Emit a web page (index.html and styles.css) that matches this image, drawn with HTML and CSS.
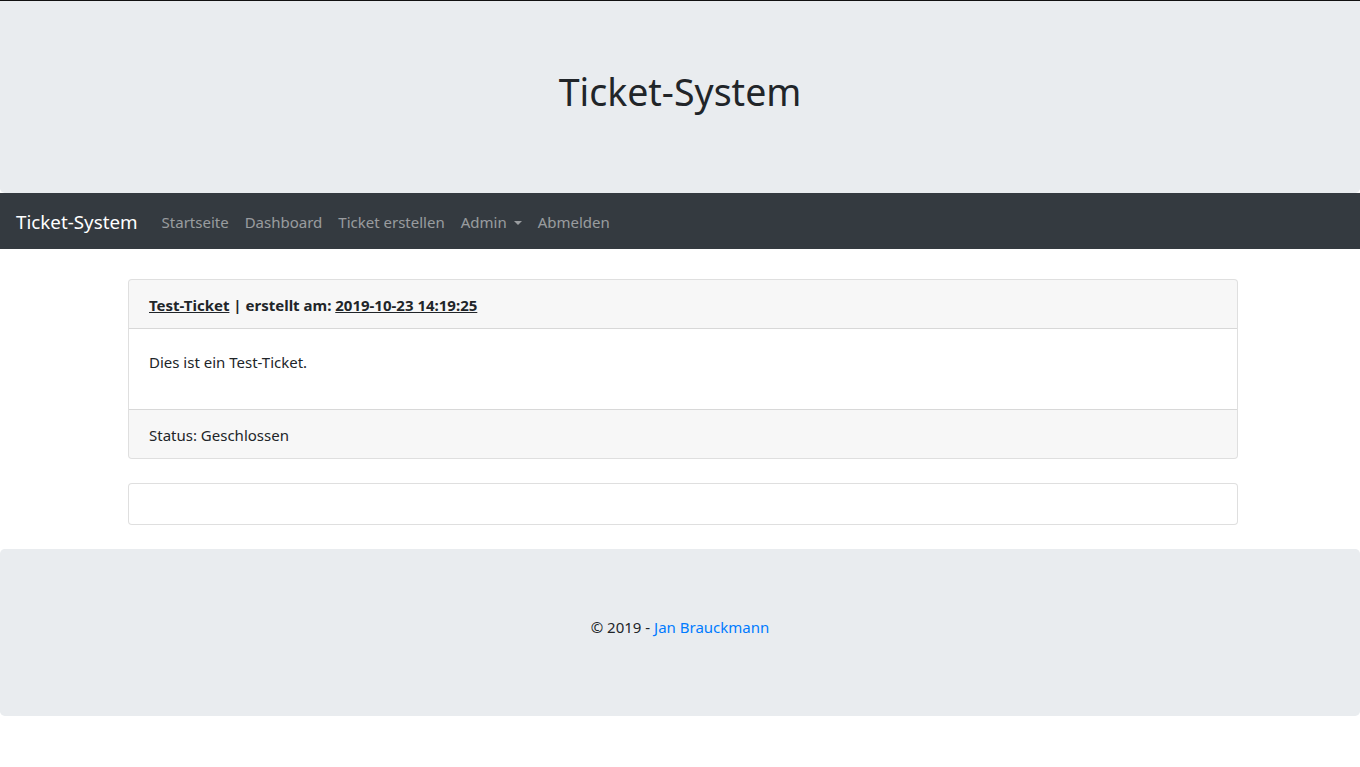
FILE: index.html
```html
<!DOCTYPE html>
<html lang="de">
<head>
<meta charset="utf-8">
<title>Ticket-System</title>
<link rel="stylesheet" href="styles.css">
</head>
<body>
<header class="jumbotron">
  <h1 class="title">Ticket-System</h1>
</header>
<nav class="navbar">
  <a class="brand" href="#">Ticket-System</a>
  <ul class="nav">
    <li><a href="#">Startseite</a></li>
    <li><a href="#">Dashboard</a></li>
    <li><a href="#">Ticket erstellen</a></li>
    <li><a href="#" class="dropdown">Admin</a></li>
    <li><a href="#">Abmelden</a></li>
  </ul>
</nav>
<main class="container">
  <section class="card">
    <div class="card-header"><a href="#">Test-Ticket</a> | erstellt am: <a href="#">2019-10-23 14:19:25</a></div>
    <div class="card-body"><p>Dies ist ein Test-Ticket.</p></div>
    <div class="card-footer">Status: Geschlossen</div>
  </section>
  <section class="card">
    <div class="card-body empty"></div>
  </section>
</main>
<footer class="jumbotron footer">
  <p>© 2019 - <a href="#">Jan Brauckmann</a></p>
</footer>
</body>
</html>
```
FILE: styles.css
```css
* { box-sizing: border-box; }
html, body { margin: 0; padding: 0; }
body {
  font-family: "Noto Sans", "Open Sans", sans-serif;
  font-size: 15px;
  line-height: 24px;
  color: #212529;
  background: #fff;
  border-top: 1px solid #111;
}
a { color: #007bff; text-decoration: none; }
.jumbotron {
  background: #e9ecef;
  border-radius: 4.8px;
}
header.jumbotron {
  height: 192px;
  display: flex;
  align-items: center;
  justify-content: center;
  border-top-left-radius: 0;
  border-top-right-radius: 0;
}
.title {
  margin: 0 0 10px;
  font-size: 37.5px;
  font-weight: 400;
  line-height: 48px;
}
.navbar {
  background: #343a40;
  height: 56px;
  display: flex;
  align-items: center;
  padding: 0 16px;
}
.brand {
  color: #fff;
  font-size: 18.8px;
  margin-right: 16px;
  line-height: 30px;
  padding-top: 2px;
}
.nav {
  list-style: none;
  margin: 0;
  padding: 0;
  display: flex;
}
.nav a {
  display: block;
  color: rgba(255,255,255,.5);
  padding: 9px 8px 7px;
}
.dropdown::after {
  content: "";
  display: inline-block;
  margin-left: 7px;
  vertical-align: 3px;
  border-top: 4.8px solid;
  border-left: 4.8px solid transparent;
  border-right: 4.8px solid transparent;
}
.container {
  width: 1110px;
  margin: 30px 0 24px 128px;
  display: flex;
  flex-direction: column;
  gap: 24px;
}
.card {
  border: 1px solid rgba(0,0,0,.125);
  border-radius: 4px;
  background: #fff;
  overflow: hidden;
}
.card-header {
  background: rgba(0,0,0,.03);
  padding: 13px 20px 11px;
  border-bottom: 1px solid rgba(0,0,0,.125);
  font-weight: 700;
}
.card-header a { color: inherit; text-decoration: underline; }
.card-body { padding: 21px 20px 19px; }
.card-body p { margin: 0 0 16px; }
.card-body.empty { height: 40px; }
.card-footer {
  background: rgba(0,0,0,.03);
  padding: 13px 20px 11px;
  border-top: 1px solid rgba(0,0,0,.125);
}
.footer {
  height: 167px;
  display: flex;
  align-items: center;
  justify-content: center;
}
.footer p { margin: 0 0 12px; }
```
